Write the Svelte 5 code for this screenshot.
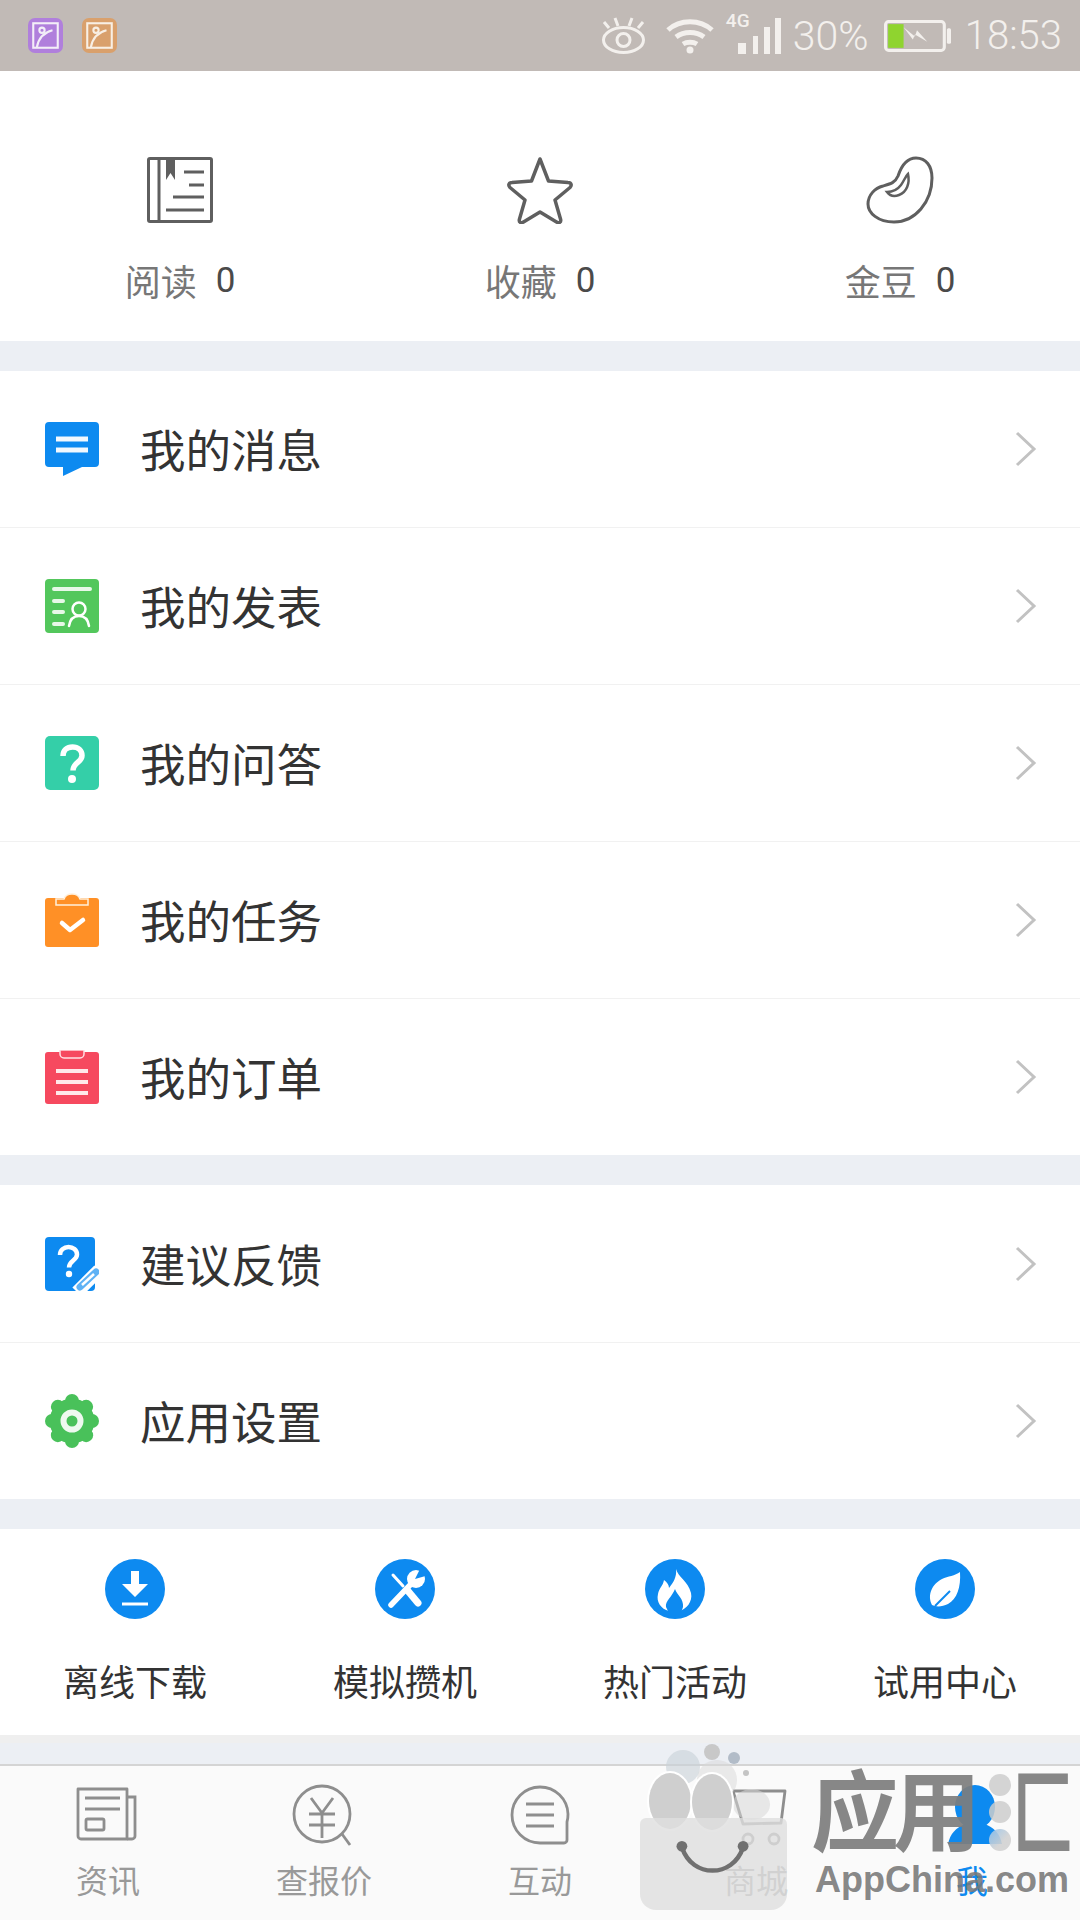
<script lang="ts">
  const stats = [
    { label: "阅读", value: 0, icon: "book" },
    { label: "收藏", value: 0, icon: "star" },
    { label: "金豆", value: 0, icon: "bean" },
  ];
  const listA = [
    { label: "我的消息", icon: "msg" },
    { label: "我的发表", icon: "post" },
    { label: "我的问答", icon: "qa" },
    { label: "我的任务", icon: "task" },
    { label: "我的订单", icon: "order" },
  ];
  const listB = [
    { label: "建议反馈", icon: "feedback" },
    { label: "应用设置", icon: "settings" },
  ];
  const tools = [
    { label: "离线下载", icon: "download" },
    { label: "模拟攒机", icon: "tools" },
    { label: "热门活动", icon: "fire" },
    { label: "试用中心", icon: "leaf" },
  ];
  const tabs = [
    { label: "资讯", icon: "news" },
    { label: "查报价", icon: "price" },
    { label: "互动", icon: "chat" },
    { label: "商城", icon: "cart" },
    { label: "我", icon: "me", active: true },
  ];
  const petals = [0, 45, 90, 135, 180, 225, 270, 315];
</script>

{#snippet listIcon(name)}
  <svg class="row-icon" viewBox="0 0 54 54">
    {#if name === "msg"}
      <path d="M4 0h46a4 4 0 0 1 4 4v37a4 4 0 0 1-4 4H37l-19 9v-9H4a4 4 0 0 1-4-4V4a4 4 0 0 1 4-4z" fill="#0d8af0" />
      <path d="M11 17h32M11 28h32" stroke="#f2f8fe" stroke-width="5" />
    {:else if name === "post"}
      <rect width="54" height="54" rx="4" fill="#53c75c" />
      <path d="M9 10h36M9 22h9M9 33h9M9 45h9" stroke="#e8f8e8" stroke-width="4" stroke-linecap="round" />
      <circle cx="34" cy="30" r="6.5" fill="none" stroke="#fff" stroke-width="2.5" />
      <path d="M24 47c1-7 5-10 10-10s9 3 10 10" fill="none" stroke="#fff" stroke-width="2.5" stroke-linecap="round" />
    {:else if name === "qa"}
      <rect width="54" height="54" rx="5" fill="#34cfa8" />
      <path d="M18 20c0-6 4-9 9.500-9s9.500 3.500 9.500 8.500c0 7-9 7-9 15" fill="none" stroke="#fff" stroke-width="5.500" />
      <circle cx="27" cy="43" r="4" fill="#fff" />
    {:else if name === "task"}
      <path d="M3 5h48a3 3 0 0 1 3 3v43a3 3 0 0 1-3 3H3a3 3 0 0 1-3-3V8a3 3 0 0 1 3-3z" fill="#ff9026" />
      <path d="M11 6h8c1-3 4-5 8-5s7 2 8 5h8v6H11z" fill="#ff9026" stroke="#fff0dc" stroke-width="1.500" />
      <path d="M17 30l8 7 13-10" fill="none" stroke="#fff" stroke-width="4.500" stroke-linecap="round" stroke-linejoin="round" />
    {:else if name === "order"}
      <path d="M3 2h48a3 3 0 0 1 3 3v46a3 3 0 0 1-3 3H3a3 3 0 0 1-3-3V5a3 3 0 0 1 3-3z" fill="#f6495f" />
      <path d="M15 0h24v4a4 4 0 0 1-4 4H19a4 4 0 0 1-4-4z" fill="#f6495f" stroke="#ffe0e4" stroke-width="1.500" />
      <path d="M11 21h32M11 32h32M11 43h32" stroke="#ffe8ea" stroke-width="4" />
    {:else if name === "feedback"}
      <rect width="50" height="54" rx="4" fill="#0d8af0" />
      <path d="M15 18c0-5 4-8 8.500-8s8.500 3 8.500 7.500c0 6-8 6-8 13" fill="none" stroke="#fff" stroke-width="4.500" />
      <circle cx="24" cy="37" r="3.200" fill="#fff" />
      <path d="M32 55l22-22" stroke="#fff" stroke-width="13" />
      <path d="M35 50l16-15" stroke="#5fb2f5" stroke-width="7" stroke-linecap="round" />
      <path d="M37 48l12-11" stroke="#fff" stroke-width="2.500" />
    {:else}
      {#each petals as a}
        <circle cx="27" cy="7" r="7" fill="#49c15a" transform="rotate({a} 27 27)" />
      {/each}
      <circle cx="27" cy="27" r="22.500" fill="#49c15a" />
      <circle cx="27" cy="27" r="8.500" fill="none" stroke="#eef9ef" stroke-width="6" />
    {/if}
  </svg>
{/snippet}

{#snippet toolIcon(name)}
  <svg class="tool-icon" viewBox="0 0 60 60">
    <circle cx="30" cy="30" r="30" fill="#0d8af0" />
    {#if name === "download"}
      <path d="M26 12h8v13h9L30 38 17 25h9z" fill="#fff" />
      <path d="M17 45h26" stroke="#fff" stroke-width="3" />
    {:else if name === "tools"}
      <path d="M18 16l10 11" stroke="#fff" stroke-width="3" stroke-linecap="round" />
      <path d="M33 32l10 12" stroke="#fff" stroke-width="7" stroke-linecap="round" />
      <path d="M16 46l20-21" stroke="#fff" stroke-width="5.500" stroke-linecap="round" />
      <circle cx="41" cy="20" r="9" fill="#fff" />
      <path d="M40 20l6-12 8 8z" fill="#0d8af0" />
    {:else if name === "fire"}
      <path d="M31 10c2 8 12 12 15 24 2 9-5 16-11 18H24c-8-2-13-9-11-17 1-6 5-8 6-14 3 2 5 5 5 8 4-5 8-11 7-19z" fill="#fff" />
      <path d="M30 30c2 6 9 10 8 18l-2 6H24l-3-6c-1-6 6-10 9-18z" fill="#0d8af0" />
    {:else}
      <path d="M45 13c1 15-3 27-12 32-6 3-12 3-16 1-5-10 0-21 10-26 6-3 13-3 18-7z" fill="#fff" />
      <path d="M20 47l15-15" fill="none" stroke="#0d8af0" stroke-width="2" />
    {/if}
  </svg>
{/snippet}

{#snippet tabIcon(name, active)}
  <svg class="tab-icon" viewBox="0 0 64 64" fill="none" stroke="#8e8e8e" stroke-width="2.800">
    {#if name === "news"}
      <path d="M2 5h49v50H5a3 3 0 0 1-3-3z" stroke-linejoin="round" />
      <path d="M51 13h8v39a3 3 0 0 1-3 3h-5" />
      <path d="M9 14h35M9 25h35" />
      <rect x="10" y="35" width="18" height="11" rx="1.500" />
    {:else if name === "price"}
      <circle cx="30" cy="30" r="28" />
      <path d="M19 14l11 15 11-15M17 30h26M17 41h26M30 29v25" />
      <path d="M50 50l8 11" />
    {:else if name === "chat"}
      <path d="M32 3a28 28 0 1 0 0 56h24a3 3 0 0 0 3-3V38a27 27 0 0 0 1-8A28 28 0 0 0 32 3z" stroke-linejoin="round" />
      <path d="M18 20h28M18 31h28M18 42h28" />
    {:else if name === "cart"}
      <path d="M9 7h52l-4 32-38 1-10-33" stroke-linejoin="round" />
      <circle cx="24" cy="55" r="5" />
      <circle cx="50" cy="55" r="5" />
    {:else}
      <g fill={active ? "#0d8af0" : "none"} stroke="none">
        <ellipse cx="35" cy="23" rx="20" ry="22" />
        <path d="M26 40h18c10 3 16 10 18 20H8c2-10 8-17 18-20z" />
      </g>
    {/if}
  </svg>
{/snippet}

<div class="page">
  <header class="status">
    <div class="notif">
      <span class="nbadge purple">
        <svg viewBox="0 0 20 20" fill="none" stroke="#f3eef8" stroke-width="1.200"><rect x="3" y="3" width="14" height="14" /><circle cx="8" cy="7" r="1.500" /><path d="M5 17c1-6 5-9 9-10" /></svg>
      </span>
      <span class="nbadge orange">
        <svg viewBox="0 0 20 20" fill="none" stroke="#f8efe4" stroke-width="1.200"><rect x="3" y="3" width="14" height="14" /><circle cx="8" cy="7" r="1.500" /><path d="M5 17c1-6 5-9 9-10" /></svg>
      </span>
    </div>
    <div class="sys">
      <svg class="s-eye" viewBox="0 0 45 37" fill="none" stroke="#f3f0ed" stroke-width="3">
        <ellipse cx="22.500" cy="23" rx="20" ry="12.500" />
        <circle cx="22.500" cy="23" r="6.500" />
        <path d="M8 11L3 5M17 9l-3-8M28 9l3-8M37 11l5-6" />
      </svg>
      <svg class="s-wifi" viewBox="0 0 50 36" fill="none" stroke="#f3f0ed" stroke-width="5">
        <path d="M3 12C15 1 35 1 47 12M11 19c8-6 20-6 28 0M18 26c4-2.500 10-2.500 14 0" />
        <circle cx="25" cy="32" r="3.500" fill="#f3f0ed" stroke="none" />
      </svg>
      <div class="s-signal">
        <span class="s-4g">4G</span>
        <svg viewBox="0 0 43 36" fill="#f3f0ed"><rect x="0" y="25" width="8" height="11" /><rect x="15" y="18" width="5" height="18" /><rect x="26" y="9" width="6" height="27" /><rect x="37" y="0" width="6" height="36" /></svg>
      </div>
      <span class="s-pct">30%</span>
      <svg class="s-batt" viewBox="0 0 65 31">
        <rect x="1.500" y="1.500" width="57" height="28" rx="3" fill="none" stroke="#f3f0ed" stroke-width="3" />
        <rect x="61" y="8" width="4" height="15" rx="1.500" fill="#f3f0ed" />
        <rect x="4" y="4" width="15" height="23" fill="#8fd42f" />
        <path d="M19 7l11 9 2-6 10 11-12-7-2 5z" fill="#f3f0ed" />
      </svg>
      <span class="s-time">18:53</span>
    </div>
  </header>

  <section class="stats">
    {#each stats as s}
      <div class="stat">
        <svg class="stat-icon" viewBox="0 0 68 68" fill="none" stroke="#5f5f5f" stroke-width="3">
          {#if s.icon === "book"}
            <rect x="2.500" y="2.500" width="63" height="63" rx="1.500" />
            <path d="M13 3v62" />
            <path d="M20 3h9v21l-4.500-7-4.500 7z" fill="#5f5f5f" stroke="none" />
            <path d="M38 16h20M43 29h15M27 41h31M20 54h38" />
          {:else if s.icon === "star"}
            <path d="M34 3l8.500 22 19.500 1.500c3.500 0 4 3 2 5L49 44l5.500 19c1 3.500-1.500 4.500-4 3L34 56 17.500 66c-2.500 1.500-5 .5-4-3L19 44 4 31.500c-2-2-1.500-5 2-5L25.500 25z" stroke-linejoin="round" stroke-width="3.500" />
          {:else}
            <path d="M50 2c10 0 16 8 16 20 0 24-17 44-38 44C12 66 2 57 2 48c0-9 7-16 15-18 7-2 12-3 15-10 3-9 8-18 18-18z" />
            <path d="M42 18c2 9-1 18-9 21-5 2-9 1-12-3 6 0 11-3 14-7 3-4 4-8 7-11z" stroke-width="2.500" />
          {/if}
        </svg>
        <div class="stat-text"><span class="stat-label">{s.label}</span><span class="stat-val">{s.value}</span></div>
      </div>
    {/each}
  </section>

  <section class="list">
    {#each listA as r}
      <div class="row">
        {@render listIcon(r.icon)}
        <span class="row-label">{r.label}</span>
        <svg class="chev" viewBox="0 0 22 36" fill="none" stroke="#c2c2c2" stroke-width="3"><path d="M2 2l17 16L2 34" /></svg>
      </div>
    {/each}
  </section>

  <section class="list second">
    {#each listB as r}
      <div class="row">
        {@render listIcon(r.icon)}
        <span class="row-label">{r.label}</span>
        <svg class="chev" viewBox="0 0 22 36" fill="none" stroke="#c2c2c2" stroke-width="3"><path d="M2 2l17 16L2 34" /></svg>
      </div>
    {/each}
  </section>

  <section class="tools">
    {#each tools as t}
      <div class="tool">
        {@render toolIcon(t.icon)}
        <span>{t.label}</span>
      </div>
    {/each}
  </section>
  <div class="tools-shade"></div>

  <nav class="tabs">
    {#each tabs as t}
      <div class="tab" class:active={t.active}>
        {@render tabIcon(t.icon, t.active)}
        <span>{t.label}</span>
      </div>
    {/each}
  </nav>

  <!-- watermark sits on top of the tab bar -->
  <div class="mark">
    <span class="bub back1"></span>
    <span class="bub back2"></span>
    <span class="bub back3"></span>
    <span class="bub head1"></span>
    <span class="bub head2"></span>
    <span class="bag"></span>
    <span class="bub dot1"></span>
    <span class="bub dot2"></span>
    <span class="bub dot3"></span>
    <svg class="smile" viewBox="0 0 80 40" fill="none" stroke="#707070" stroke-width="5"><path d="M6 8c6 18 20 26 34 26s28-8 34-26" /><circle cx="6" cy="7" r="6" fill="#707070" stroke="none" /><circle cx="74" cy="7" r="6" fill="#707070" stroke="none" /></svg>
    <span class="mark-cn">应用</span>
    <span class="bub w1"></span>
    <span class="bub w2"></span>
    <span class="bub w3"></span>
    <span class="mark-c3">匚</span>
    <span class="mark-en">AppChina.com</span>
  </div>
</div>

<style>
  :global(body) {
    margin: 0;
    background: #fff;
  }

  .page {
    position: relative;
    width: 1080px;
    height: 1920px;
    overflow: hidden;
    background: #eceff4;
    font-family: "Noto Sans CJK SC", "Noto Sans", sans-serif;
  }

  .status {
    height: 71px;
    background: #c1bab6;
    display: flex;
    align-items: center;
    justify-content: space-between;
    padding: 0 18px 0 28px;
    box-sizing: border-box;
  }
  .notif {
    display: flex;
    gap: 19px;
  }
  .nbadge {
    width: 35px;
    height: 35px;
    border-radius: 7px;
    display: block;
  }
  .nbadge svg {
    display: block;
    width: 35px;
    height: 35px;
  }
  .purple {
    background: #b07fdc;
  }
  .orange {
    background: #d9a06c;
  }
  .sys {
    display: flex;
    align-items: center;
    color: #f3f0ed;
    font-family: "Roboto", sans-serif;
    font-weight: 300;
  }
  .s-eye {
    width: 45px;
    height: 37px;
    margin-right: 19px;
  }
  .s-wifi {
    width: 50px;
    height: 36px;
    margin-right: 23px;
  }
  .s-signal {
    position: relative;
    width: 43px;
    height: 36px;
    margin-right: 12px;
  }
  .s-signal svg {
    position: absolute;
    left: 0;
    top: 0;
    width: 43px;
    height: 36px;
  }
  .s-4g {
    position: absolute;
    left: -12px;
    top: -7px;
    font-size: 19px;
    line-height: 20px;
    font-weight: 500;
  }
  .s-pct {
    font-size: 41px;
    width: 76px;
    margin-right: 15px;
    white-space: nowrap;
  }
  .s-batt {
    width: 67px;
    height: 32px;
    margin-right: 14px;
  }
  .s-time {
    font-size: 40px;
  }

  .stats {
    height: 270px;
    background: #fff;
    display: grid;
    grid-template-columns: repeat(3, 360px);
  }
  .stat {
    display: flex;
    flex-direction: column;
    align-items: center;
    padding-top: 85px;
    box-sizing: border-box;
  }
  .stat-icon {
    width: 68px;
    height: 68px;
  }
  .stat-text {
    display: flex;
    align-items: center;
    height: 44px;
    margin-top: 34px;
    gap: 19px;
  }
  .stat-label {
    font-size: 36px;
    color: #777;
  }
  .stat-val {
    font-size: 35px;
    color: #4a4a4a;
    font-family: "Roboto", sans-serif;
  }

  .list {
    margin-top: 30px;
    background: #fff;
  }
  .row {
    height: 157px;
    display: flex;
    align-items: center;
    padding: 0 43px 0 45px;
    box-sizing: border-box;
    border-top: 1px solid #f1f1f1;
  }
  .row:first-child {
    border-top: none;
    height: 156px;
  }
  .second .row:first-child {
    height: 157px;
  }
  .row-icon {
    width: 54px;
    height: 54px;
    margin-right: 41px;
    flex: none;
  }
  .row-label {
    font-size: 45.5px;
    color: #333;
    flex: 1;
    padding-bottom: 2px;
  }
  .chev {
    width: 22px;
    height: 36px;
  }

  .tools {
    margin-top: 30px;
    height: 206px;
    background: #fff;
    display: grid;
    grid-template-columns: repeat(4, 270px);
  }
  .tools-shade {
    height: 8px;
    background: #efefef;
  }
  .tool {
    display: flex;
    flex-direction: column;
    align-items: center;
    padding-top: 30px;
    box-sizing: border-box;
  }
  .tool-icon {
    width: 60px;
    height: 60px;
  }
  .tool span {
    font-size: 36px;
    line-height: 44px;
    margin-top: 39px;
    color: #333;
  }

  .tabs {
    position: absolute;
    left: 0;
    right: 0;
    bottom: 0;
    height: 156px;
    background: #fafafa;
    border-top: 2px solid #d4d4d4;
    box-sizing: border-box;
    display: grid;
    grid-template-columns: repeat(5, 216px);
  }
  .tab {
    display: flex;
    flex-direction: column;
    align-items: center;
    padding-top: 18px;
    box-sizing: border-box;
    color: #999;
  }
  .tab-icon {
    width: 64px;
    height: 64px;
  }
  .tab span {
    font-size: 32px;
    line-height: 40px;
    margin-top: 11px;
  }
  .tab.active {
    color: #0d8af0;
  }

  .mark {
    position: absolute;
    left: 638px;
    top: 1744px;
    width: 442px;
    height: 176px;
    pointer-events: none;
  }
  .mark > * {
    position: absolute;
  }
  .bag {
    left: 2px;
    top: 74px;
    width: 147px;
    height: 92px;
    background: rgba(222, 222, 222, 0.8);
    border-radius: 6px 6px 16px 16px;
  }
  .bub {
    border-radius: 50%;
    background: rgba(190, 190, 190, 0.75);
  }
  .back1 {
    left: 28px;
    top: 6px;
    width: 34px;
    height: 34px;
    background: rgba(200, 208, 215, 0.6);
  }
  .back2 {
    left: 59px;
    top: 16px;
    width: 40px;
    height: 40px;
    background: rgba(215, 215, 215, 0.5);
  }
  .back3 {
    left: 95px;
    top: 45px;
    width: 37px;
    height: 31px;
    background: rgba(215, 215, 215, 0.55);
  }
  .head1 {
    left: 11px;
    top: 29px;
    width: 42px;
    height: 56px;
    background: #cfcfcf;
    box-shadow: 0 0 0 2px #fff;
  }
  .head2 {
    left: 54px;
    top: 30px;
    width: 40px;
    height: 56px;
    background: #cfcfcf;
    box-shadow: 0 0 0 2px #fff;
  }
  .dot1 {
    left: 66px;
    top: 0;
    width: 16px;
    height: 16px;
    background: #c8c8c8;
  }
  .dot2 {
    left: 90px;
    top: 8px;
    width: 12px;
    height: 12px;
    background: #b2bcc8;
  }
  .dot3 {
    left: 105px;
    top: 26px;
    width: 6px;
    height: 6px;
    background: #c4c4c4;
  }
  .smile {
    left: 38px;
    top: 96px;
    width: 73px;
    height: 36px;
  }
  .mark-cn {
    left: 173px;
    top: 10px;
    font-size: 88px;
    line-height: 104px;
    font-weight: 700;
    color: rgba(125, 125, 125, 0.92);
    letter-spacing: -6px;
    white-space: nowrap;
  }
  .w1,
  .w2,
  .w3 {
    left: 351px;
    width: 22px;
    height: 22px;
    background: rgba(205, 205, 205, 0.85);
  }
  .w1 {
    top: 30px;
  }
  .w2 {
    top: 57px;
  }
  .w3 {
    top: 85px;
    background: linear-gradient(135deg, rgba(150, 195, 235, 0.9), rgba(210, 210, 210, 0.9) 60%);
  }
  .mark-c3 {
    left: 374px;
    top: 8px;
    font-size: 94px;
    line-height: 110px;
    font-weight: 700;
    color: rgba(125, 125, 125, 0.92);
    transform: scaleX(0.66);
    transform-origin: left center;
  }
  .mark-en {
    left: 177px;
    top: 116px;
    font-family: "Liberation Sans", sans-serif;
    font-size: 36px;
    line-height: 40px;
    font-weight: 700;
    color: rgba(120, 120, 120, 0.9);
    white-space: nowrap;
  }
</style>
